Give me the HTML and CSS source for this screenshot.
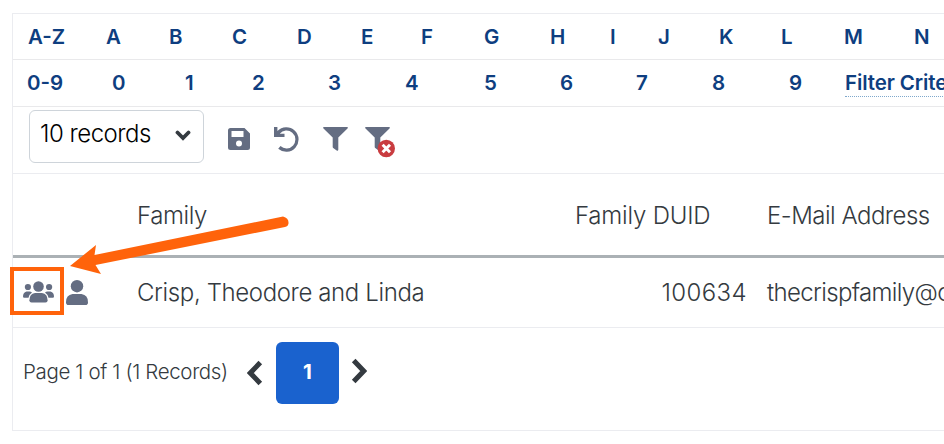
FILE: index.html
```html
<!DOCTYPE html>
<html lang="en">
<head>
    <meta charset="UTF-8">
    <meta name="viewport" content="width=device-width, initial-scale=1.0">
    <title>Families</title>
    <link rel="stylesheet" href="styles.css">
</head>
<body>
    <div class="list">
        <div class="index letters">
            <a>A-Z</a><a>A</a><a>B</a><a>C</a><a>D</a><a>E</a><a>F</a><a>G</a><a>H</a><a>I</a><a>J</a><a>K</a><a>L</a><a>M</a><a>N</a>
        </div>
        <div class="index numbers">
            <a>0-9</a><a>0</a><a>1</a><a>2</a><a>3</a><a>4</a><a>5</a><a>6</a><a>7</a><a>8</a><a>9</a><a class="criteria">Filter Criteria</a>
        </div>

        <div class="toolbar">
            <div class="select">
                <span>10 records</span>
                <svg width="16" height="11" viewBox="0 0 16 11"><path d="M2.500 2.500 8 8l5.500-5.500" fill="none" stroke="#343a40" stroke-width="3.800" stroke-linecap="round"/></svg>
            </div>
            <svg class="tool save" width="22" height="22" viewBox="0 0 22 22"><path fill-rule="evenodd" d="M2.500 0H16.500L22 5.500V19.500A2.500 2.500 0 0 1 19.500 22H2.500A2.500 2.500 0 0 1 0 19.500V2.500A2.500 2.500 0 0 1 2.500 0ZM3.500 3V9H15.500V3ZM11 12.500A3 3 0 1 0 11 18.500A3 3 0 1 0 11 12.500Z"/></svg>
            <svg class="tool undo" width="25" height="25" viewBox="0 0 25 25"><path d="M0 0H3.400V4A12.300 12.300 0 1 1 4.200 21.800L6.500 19.100A8.900 8.900 0 1 0 5.700 6.700H10.500V10H0Z"/></svg>
            <svg class="tool filter" width="25" height="24" viewBox="0 0 25 24"><path d="M.8 0H24.200Q25.400 .6 24.500 1.600L15.300 10.500V22.800Q15 24.400 13.700 23.500L10.200 21Q9.700 20.600 9.700 20V10.500L.5 1.600Q-.4 .6 .8 0Z"/></svg>
            <svg class="tool clear" width="30" height="31" viewBox="0 0 30 31">
                <path d="M.8 0H24.200Q25.400 .6 24.500 1.600L15.300 10.500V22.800Q15 24.400 13.700 23.500L10.200 21Q9.700 20.600 9.700 20V10.500L.5 1.600Q-.4 .6 .8 0Z"/>
                <circle cx="21.300" cy="21.500" r="8.700" fill="#c93c40"/>
                <path d="M17.600 17.800 25 25.200M25 17.800 17.600 25.200" stroke="#fff" stroke-width="3"/>
            </svg>
        </div>

        <div class="row head">
            <span></span>
            <span class="t-family">Family</span>
            <span class="t-duid">Family DUID</span>
            <span class="t-email">E-Mail Address</span>
        </div>

        <div class="row record">
            <span class="people">
                <svg width="31" height="22" viewBox="0 0 31 22">
                    <circle cx="15.500" cy="5.500" r="5.300"/>
                    <circle cx="4.900" cy="6" r="3.100"/>
                    <circle cx="26.100" cy="6" r="3.100"/>
                    <path d="M12 12H19Q24.600 13 24.600 19.300Q24.600 21.500 22.500 21.500H8.500Q6.400 21.500 6.400 19.300Q6.400 13 12 12Z"/>
                    <path d="M3.500 10.500H6.500Q8 10.600 9 11.500Q6.200 13.300 5.500 16.800H1.200Q0 16.600 0 15.400Q0 11.500 3.500 10.500ZM27.500 10.500H24.500Q23 10.600 22 11.500Q24.800 13.300 25.500 16.800H29.800Q31 16.600 31 15.400Q31 11.500 27.500 10.500Z"/>
                </svg>
                <svg class="person" width="22" height="25" viewBox="0 0 22 25">
                    <circle cx="11" cy="6.200" r="6.200"/>
                    <path d="M6.500 14H15.500Q22 15 22 22.200Q22 25 19.500 25H2.500Q0 25 0 22.200Q0 15 6.500 14Z"/>
                </svg>
            </span>
            <span class="t-name">Crisp, Theodore and Linda</span>
            <span class="duid">100634</span>
            <span class="t-mail">thecrispfamily@c</span>
        </div>

        <div class="pager">
            <span class="count">Page 1 of 1 (1 Records)</span>
            <svg class="prev" width="16" height="26" viewBox="0 0 16 26"><path d="M13.300 2.500 3.300 13 13.300 23.500"/></svg>
            <span class="current">1</span>
            <svg class="next" width="16" height="26" viewBox="0 0 16 26"><path d="M2.700 2.500 12.700 13 2.700 23.500"/></svg>
        </div>
    </div>

    <!-- callout pointing at the family icon -->
    <div class="callout-box"></div>
    <svg class="callout-arrow" width="222" height="70" viewBox="0 0 222 70">
        <path d="M0 61 26 40 24.500 50 213 11.500Q219 13 218.500 18.500Q218 21.500 215 22L25.500 60 31 69Z"/>
    </svg>
</body>
</html>
```
FILE: styles.css
```css
* {
    box-sizing: border-box;
}
body {
    margin: 0;
    background: #fff;
    color: #343a40;
    font-family: Inter, "Open Sans", sans-serif;
    font-weight: 300;
    overflow: hidden;
}
svg {
    display: block;
    flex: none;
    fill: #646d82;
}
.list {
    margin: 13px 0 0 12px;
    height: 418px;
    border: 1px solid #ebecf0;
    border-right: none;
    overflow: hidden;
}
.index {
    display: grid;
    align-items: center;
    border-bottom: 1px solid #e9e9eb;
    color: #0e3e80;
    font-size: 20.500px;
    font-weight: 600;
    white-space: nowrap;
}
.letters {
    height: 46px;
    padding-left: 15px;
    grid-template-columns: 78px 63px 63px 65px 64px 60px 63px 66px 60px 48px 61px 62px 63px 70px auto;
}
.numbers {
    height: 47px;
    padding: 0 0 2px 14px;
    grid-template-columns: 85px 73px 67px 76px 77px 79px 76px 76px 76px 77px 56px auto;
}
.criteria {
    justify-self: start;
    border-bottom: 1px dotted #7fa8cc;
    line-height: 27px;
    letter-spacing: -0.1px;
    margin-top: 2px;
}
.toolbar {
    display: flex;
    align-items: flex-start;
    height: 67px;
    padding: 3px 0 0 16px;
    border-bottom: 1px solid #ebecf0;
}
.select {
    display: flex;
    justify-content: space-between;
    width: 175px;
    height: 53px;
    padding: 8px 12px 0 10px;
    border: 1px solid #ced4da;
    border-radius: 6px;
    color: #000;
    font-size: 24px;
    line-height: 29px;
    letter-spacing: -0.5px;
}
.select svg {
    margin-top: 11px;
}
.save {
    margin: 18px 0 0 24px;
}
.undo {
    margin: 17px 0 0 24px;
}
.filter {
    margin: 17px 0 0 24px;
}
.clear {
    margin: 17px 0 0 17px;
}
.row {
    display: grid;
    grid-template-columns: 124px 438px 172px auto;
    align-items: center;
    font-size: 24px;
    letter-spacing: -0.38px;
    white-space: nowrap;
}
.head {
    height: 84px;
    padding-top: 2px;
    border-bottom: 3px solid #abb1b5;
}
.record {
    height: 70px;
    border-bottom: 1px solid #ebecf0;
}
.people {
    display: flex;
    gap: 12px;
    padding-left: 10px;
}
.person {
    margin-top: -1px;
}
.duid {
    text-align: right;
    letter-spacing: 0.4px;
}
.t-duid {
    letter-spacing: -0.2px;
}
.t-email,
.t-mail {
    padding-left: 20px;
    letter-spacing: -0.5px;
}
.t-mail {
    letter-spacing: -0.65px;
}
.pager {
    display: flex;
    align-items: center;
    height: 90px;
    padding-left: 10px;
    font-size: 20.500px;
}
.count {
    width: 224px;
    padding-bottom: 4px;
    letter-spacing: -0.36px;
    white-space: nowrap;
}
.pager svg {
    fill: none;
    stroke: #343a40;
    stroke-width: 5;
}
.pager .next {
    margin-bottom: 4px;
}
.current {
    width: 63px;
    height: 62px;
    margin: 0 12px 0 13px;
    border-radius: 6px;
    background: #1a62ce;
    color: #fff;
    font-weight: 700;
    line-height: 60px;
    text-align: center;
}
.callout-box {
    position: absolute;
    left: 10px;
    top: 267px;
    width: 54px;
    height: 48px;
    border: 4px solid #ff630b;
}
.callout-arrow {
    position: absolute;
    left: 70px;
    top: 205px;
    fill: #ff630b;
}
```
